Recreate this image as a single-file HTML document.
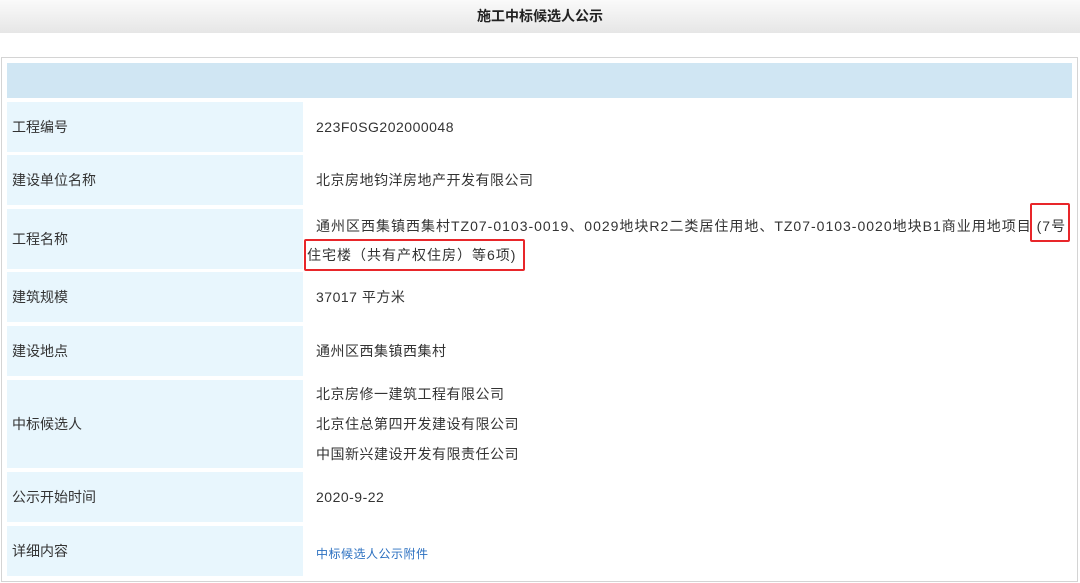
<!DOCTYPE html>
<html><head><meta charset="utf-8"><style>
*{margin:0;padding:0;box-sizing:border-box}
body{width:1080px;height:583px;background:#fff;position:relative;overflow:hidden;font-family:"Liberation Sans","Noto Sans CJK SC",sans-serif;color:#333;font-size:14px}
.top{position:absolute;left:0;top:0;width:1080px;height:33px;background:linear-gradient(#fafafa,#e6e6e6);text-align:center;line-height:32px;font-weight:bold;font-size:14px;color:#222}
.box{position:absolute;left:1px;top:57px;width:1077px;height:525px;border:1px solid #d4d4d4}
.hd{position:absolute;left:7px;top:63px;width:1065px;height:35px;background:#d0e6f3}
.l{position:absolute;left:7px;width:296px;background:#e8f6fd;padding-left:5px;display:flex;align-items:center}
.v{position:absolute;left:316px;display:flex;flex-direction:column;justify-content:center;letter-spacing:0.5px}
.rb{position:absolute;border:2px solid #e8262a;border-radius:2px}
a{color:#2a6fc0;font-size:12px;text-decoration:none}
</style></head><body>
<div class="top">施工中标候选人公示</div>
<div class="box"></div>
<div class="hd"></div>

<div class="l" style="top:102px;height:50px">工程编号</div>
<div class="v" style="top:102px;height:50px">223F0SG202000048</div>

<div class="l" style="top:155px;height:50px">建设单位名称</div>
<div class="v" style="top:155px;height:50px">北京房地钧洋房地产开发有限公司</div>

<div class="l" style="top:209px;height:60px">工程名称</div>
<div style="position:absolute;left:316px;top:214px;white-space:nowrap;line-height:24px;letter-spacing:1px">通州区西集镇西集村TZ07-0103-0019、0029地块R2二类居住用地、TZ07-0103-0020地块B1商业用地项目 (7号</div>
<div style="position:absolute;left:307px;top:243px;white-space:nowrap;line-height:24px;letter-spacing:1px">住宅楼（共有产权住房）等6项)</div>
<div class="rb" style="left:1030px;top:203px;width:40px;height:39px"></div>
<div class="rb" style="left:304px;top:239px;width:221px;height:32px"></div>

<div class="l" style="top:272px;height:50px">建筑规模</div>
<div class="v" style="top:272px;height:50px">37017 平方米</div>

<div class="l" style="top:326px;height:50px">建设地点</div>
<div class="v" style="top:326px;height:50px">通州区西集镇西集村</div>

<div class="l" style="top:380px;height:88px">中标候选人</div>
<div class="v" style="top:380px;height:88px;line-height:30px">
<div>北京房修一建筑工程有限公司</div><div>北京住总第四开发建设有限公司</div><div>中国新兴建设开发有限责任公司</div></div>

<div class="l" style="top:472px;height:50px">公示开始时间</div>
<div class="v" style="top:472px;height:50px">2020-9-22</div>

<div class="l" style="top:526px;height:50px">详细内容</div>
<div class="v" style="top:528px;height:50px"><a>中标候选人公示附件</a></div>
</body></html>
